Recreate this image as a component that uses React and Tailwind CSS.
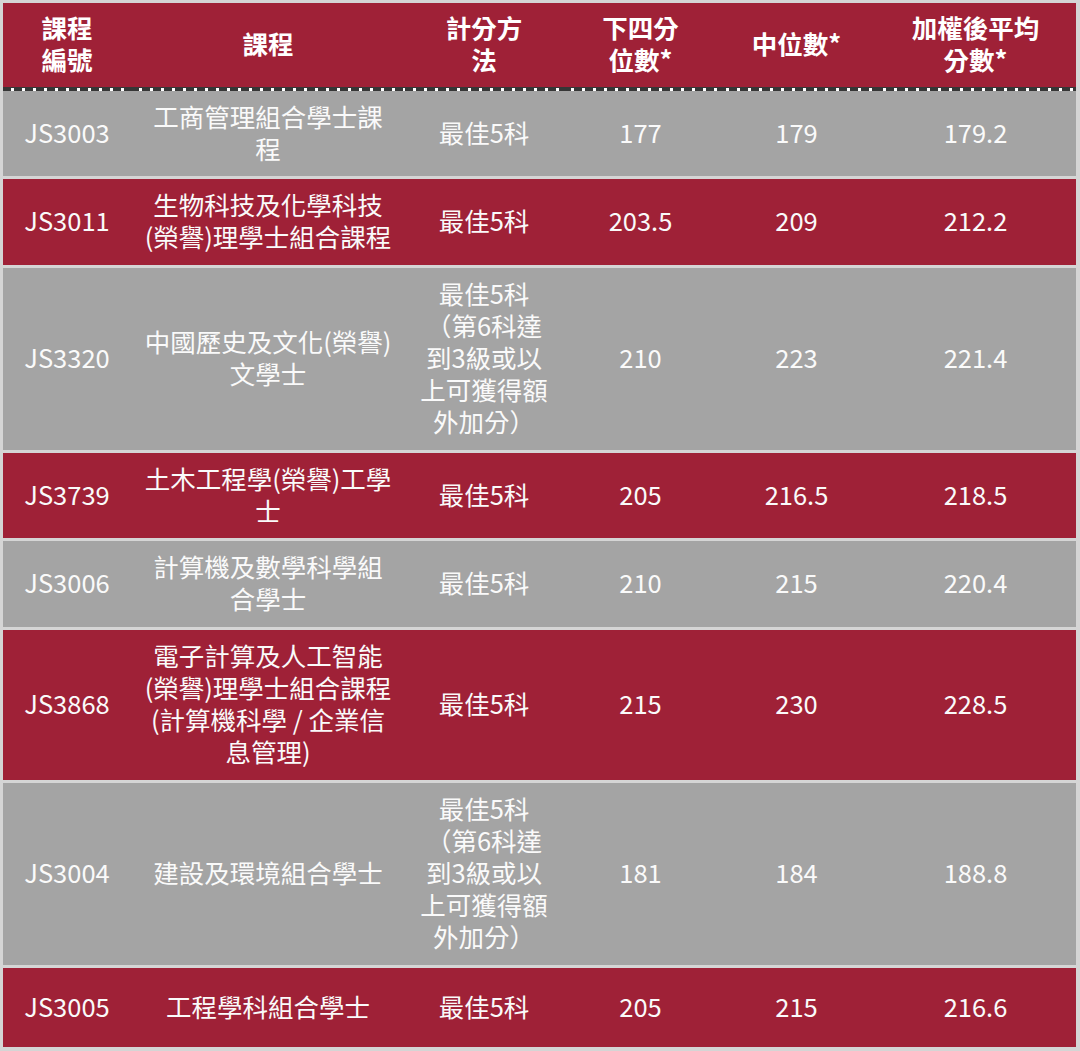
import React from "react";

const rows = [
  { code: "JS3003", name: ["工商管理組合學士課", "程"], method: ["最佳5科"], lq: "177", med: "179", avg: "179.2", h: "h-[85px]", red: false },
  { code: "JS3011", name: ["生物科技及化學科技", "(榮譽)理學士組合課程"], method: ["最佳5科"], lq: "203.5", med: "209", avg: "212.2", h: "h-[86px]", red: true },
  { code: "JS3320", name: ["中國歷史及文化(榮譽)", "文學士"], method: ["最佳5科", "（第6科達", "到3級或以", "上可獲得額", "外加分）"], lq: "210", med: "223", avg: "221.4", h: "h-[182px]", red: false },
  { code: "JS3739", name: ["土木工程學(榮譽)工學", "士"], method: ["最佳5科"], lq: "205", med: "216.5", avg: "218.5", h: "h-[85px]", red: true },
  { code: "JS3006", name: ["計算機及數學科學組", "合學士"], method: ["最佳5科"], lq: "210", med: "215", avg: "220.4", h: "h-[86px]", red: false },
  { code: "JS3868", name: ["電子計算及人工智能", "(榮譽)理學士組合課程", "(計算機科學 / 企業信", "息管理)"], method: ["最佳5科"], lq: "215", med: "230", avg: "228.5", h: "h-[150px]", red: true },
  { code: "JS3004", name: ["建設及環境組合學士"], method: ["最佳5科", "（第6科達", "到3級或以", "上可獲得額", "外加分）"], lq: "181", med: "184", avg: "188.8", h: "h-[182px]", red: false },
  { code: "JS3005", name: ["工程學科組合學士"], method: ["最佳5科"], lq: "205", med: "215", avg: "216.6", h: "h-[79px]", red: true },
];

const grid = "grid grid-cols-[128px_274px_158px_155px_157px_201px]";

function Lines({ lines }) {
  return (
    <div className="text-center whitespace-nowrap">
      {lines.map((l, i) => (
        <div key={i}>{l}</div>
      ))}
    </div>
  );
}

function Cell({ children }) {
  return <div className="flex items-center justify-center pb-[4px]">{children}</div>;
}

export default function App() {
  return (
    <div
      className="w-[1080px] h-[1051px] bg-[#d5d5d5] pt-[3px] pl-[3px] pr-[4px] pb-[4px] text-[#fafafa] text-[25.5px] leading-[32px]"
      style={{ fontFamily: '"Noto Sans CJK TC", "Noto Sans", sans-serif' }}
    >
      <div className={`${grid} h-[84px] bg-[#9f2137] font-bold text-white`}>
        <Cell><Lines lines={["課程", "編號"]} /></Cell>
        <Cell><Lines lines={["課程"]} /></Cell>
        <Cell><Lines lines={["計分方", "法"]} /></Cell>
        <Cell><Lines lines={["下四分", "位數*"]} /></Cell>
        <Cell><Lines lines={["中位數*"]} /></Cell>
        <Cell><Lines lines={["加權後平均", "分數*"]} /></Cell>
      </div>
      <div className={`${grid} h-[4px]`}>
        {[0, 1, 2, 3, 4, 5].map((i) => (
          <div key={i} className="h-[4px] bg-[#363636] flex flex-col">
            <div className="h-[1px]" />
            <div className="h-[3px] bg-[repeating-linear-gradient(90deg,transparent_0_8px,#ffffff_8px_11px)]" />
          </div>
        ))}
      </div>
      <div className="flex flex-col gap-[3px]">
        {rows.map((r) => (
          <div key={r.code} className={`${grid} ${r.h} ${r.red ? "bg-[#9f2137]" : "bg-[#a4a4a4]"}`}>
            <Cell><Lines lines={[r.code]} /></Cell>
            <Cell><Lines lines={r.name} /></Cell>
            <Cell><Lines lines={r.method} /></Cell>
            <Cell><Lines lines={[r.lq]} /></Cell>
            <Cell><Lines lines={[r.med]} /></Cell>
            <Cell><Lines lines={[r.avg]} /></Cell>
          </div>
        ))}
      </div>
    </div>
  );
}
